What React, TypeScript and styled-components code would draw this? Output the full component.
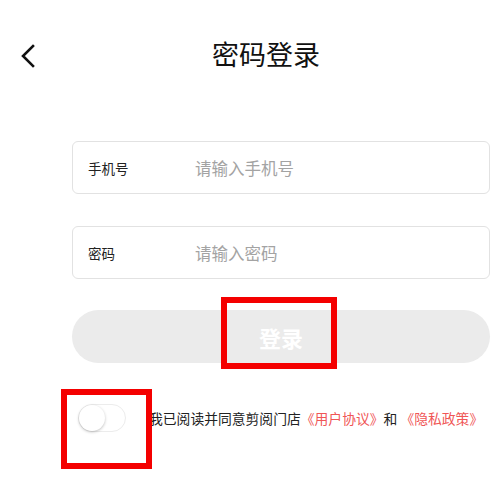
import React from "react";
import styled, { createGlobalStyle } from "styled-components";

const Global = createGlobalStyle`
  html, body { margin: 0; padding: 0; background: #fff; }
  body { font-family: "Noto Sans CJK SC", "Noto Sans", sans-serif; color: #111; }
`;

const Page = styled.div`
  width: 498px;
  height: 504px;
  position: relative;
  overflow: hidden;
  background: #fff;
`;

const Header = styled.div`
  display: flex;
  align-items: center;
  height: 44px;
  margin-top: 32px;
  position: relative;
`;

const Back = styled.button`
  position: absolute;
  left: 14px;
  top: 10px;
  width: 28px;
  height: 28px;
  padding: 0;
  border: none;
  background: none;
  display: flex;
  align-items: center;
  justify-content: center;
`;

const Title = styled.h1`
  flex: 1;
  margin: 0;
  padding-left: 34px;
  text-align: center;
  font-size: 27px;
  font-weight: 400;
  color: #111;
  line-height: 44px;
`;

const Form = styled.div`
  display: flex;
  flex-direction: column;
  margin: 65px 8px 0 72px;
`;

const Field = styled.div`
  display: flex;
  align-items: center;
  height: 51px;
  border: 1px solid #e2e2e2;
  border-radius: 6px;
  margin-bottom: 32px;
`;

const Label = styled.span`
  box-sizing: border-box;
  width: 122px;
  padding-left: 15px;
  font-size: 13.5px;
  color: #222;
`;

const Placeholder = styled.span`
  font-size: 16.5px;
  color: #a3a3a3;
`;

const LoginButton = styled.div`
  margin-top: -1px;
  height: 53px;
  border-radius: 27px;
  background: #ebebeb;
  display: flex;
  align-items: center;
  justify-content: center;
  font-size: 22px;
  font-weight: 700;
  color: #fff;
`;

const Agreement = styled.div`
  display: flex;
  align-items: center;
  margin: 41px 0 0 78px;
`;

const Switch = styled.div`
  width: 48px;
  height: 28px;
  border-radius: 14px;
  border: 1px solid #ececec;
  box-sizing: border-box;
  background: #fff;
  position: relative;
  margin-right: 23px;
`;

const Knob = styled.div`
  position: absolute;
  left: 0;
  top: 0;
  width: 26px;
  height: 26px;
  border-radius: 50%;
  background: #fff;
  box-shadow: 0 1px 3px rgba(0, 0, 0, 0.25);
`;

const AgreeText = styled.span`
  font-size: 13.8px;
  color: #222;
  white-space: nowrap;
`;

const Link = styled.span`
  color: #f05656;
`;

const Marker = styled.div<{ $l: number; $t: number; $w: number; $h: number }>`
  position: absolute;
  left: ${(p) => p.$l}px;
  top: ${(p) => p.$t}px;
  width: ${(p) => p.$w}px;
  height: ${(p) => p.$h}px;
  border: 6px solid #f40000;
  box-sizing: border-box;
  pointer-events: none;
`;

export default function App() {
  return (
    <Page>
      <Global />
      <Header>
        <Back aria-label="back">
          <svg width="16" height="24" viewBox="0 0 16 24" fill="none">
            <path d="M13 2 L3 12 L13 22" stroke="#111" strokeWidth="2.6" strokeLinecap="square" />
          </svg>
        </Back>
        <Title>密码登录</Title>
      </Header>
      <Form>
        <Field>
          <Label>手机号</Label>
          <Placeholder>请输入手机号</Placeholder>
        </Field>
        <Field>
          <Label>密码</Label>
          <Placeholder>请输入密码</Placeholder>
        </Field>
        <LoginButton>登录</LoginButton>
      </Form>
      <Agreement>
        <Switch>
          <Knob />
        </Switch>
        <AgreeText>
          我已阅读并同意剪阅门店<Link>《用户协议》</Link>和 <Link>《隐私政策》</Link>
        </AgreeText>
      </Agreement>
      <Marker $l={221} $t={297} $w={116} $h={72} />
      <Marker $l={61} $t={389} $w={91} $h={80} />
    </Page>
  );
}
